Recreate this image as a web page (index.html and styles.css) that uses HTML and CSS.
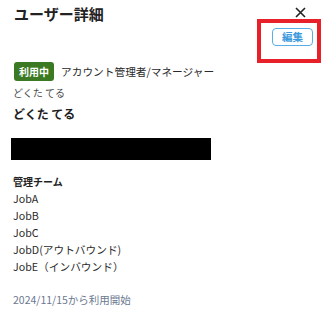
FILE: index.html
```html
<!DOCTYPE html>
<html lang="ja">
<head>
<meta charset="utf-8">
<link rel="stylesheet" href="styles.css">
</head>
<body>
<div class="panel">
  <div class="header">
    <h1 class="title">ユーザー詳細</h1>
    <button class="close" aria-label="閉じる">
      <svg width="11" height="11" viewBox="0 0 11 11"><path d="M1 1L10 10M10 1L1 10" stroke="#222" stroke-width="1.6" fill="none"/></svg>
    </button>
  </div>
  <div class="actions">
    <button class="edit">編集</button>
    <div class="highlight"></div>
  </div>
  <div class="status-row">
    <span class="badge">利用中</span>
    <span class="role">アカウント管理者/マネージャー</span>
  </div>
  <div class="kana">どくた てる</div>
  <div class="name">どくた てる</div>
  <div class="redacted"></div>
  <div class="section-title">管理チーム</div>
  <ul class="teams">
    <li>JobA</li>
    <li>JobB</li>
    <li>JobC</li>
    <li>JobD(アウトバウンド)</li>
    <li>JobE（インバウンド）</li>
  </ul>
  <div class="since">2024/11/15から利用開始</div>
</div>
</body>
</html>
```
FILE: styles.css
```css
* { box-sizing: border-box; }
html, body { margin: 0; padding: 0; background: #fff; }
body {
  font-family: "Noto Sans CJK JP", "Noto Sans", sans-serif;
  color: #222;
  width: 321px;
  height: 319px;
  overflow: hidden;
}
.panel { padding: 0 13px 0 13px; }
.header {
  display: flex;
  justify-content: space-between;
  align-items: center;
  height: 24px;
  padding-top: 3px;
}
.title {
  margin: 0;
  margin-left: 1px;
  font-size: 15px;
  font-weight: 700;
  line-height: 22px;
  color: #222;
}
.close {
  border: 0;
  background: none;
  padding: 0;
  width: 11px;
  height: 11px;
  margin-right: 2px;
  margin-top: -2px;
  display: block;
}
.close svg { display: block; }
.actions {
  display: flex;
  justify-content: flex-end;
  position: relative;
  margin-top: 4px;
  height: 18px;
}
.edit {
  width: 41px;
  height: 18px;
  margin-right: -5px;
  border: 1px solid #5aaee6;
  border-radius: 4px;
  background: #fff;
  color: #3b99dd;
  font-family: "Noto Sans CJK JP", sans-serif;
  font-size: 10.5px;
  font-weight: 700;
  padding: 0;
  line-height: 16px;
}
.highlight {
  position: absolute;
  right: -13px;
  top: -9px;
  width: 64px;
  height: 44px;
  border: 4px solid #e8202a;
}
.status-row {
  display: flex;
  align-items: center;
  margin-top: 16px;
  gap: 7px;
  height: 19px;
}
.badge {
  background: #3b7a22;
  color: #fff;
  font-size: 10px;
  font-weight: 700;
  border-radius: 3px;
  height: 19px;
  line-height: 19px;
  padding: 0 5px;
  margin-left: 1px;
}
.role {
  font-size: 10.7px;
  color: #2a2a2a;
}
.kana {
  margin-top: 3px;
  font-size: 10px;
  line-height: 18px;
  color: #4a4a4a;
}
.name {
  margin-top: 2px;
  font-size: 12px;
  font-weight: 700;
  line-height: 20px;
  color: #1e1e1e;
}
.redacted {
  margin-top: 14px;
  margin-left: -2px;
  width: 200px;
  height: 22px;
  background: #000;
}
.section-title {
  margin-top: 13px;
  font-size: 10px;
  font-weight: 700;
  line-height: 17px;
  color: #222;
}
.teams {
  list-style: none;
  margin: 0;
  padding: 0;
}
.teams li {
  font-size: 10.7px;
  line-height: 17px;
  color: #2a2a2a;
}
.since {
  margin-top: 16px;
  font-size: 10.5px;
  line-height: 17px;
  color: #6a7890;
}
```
